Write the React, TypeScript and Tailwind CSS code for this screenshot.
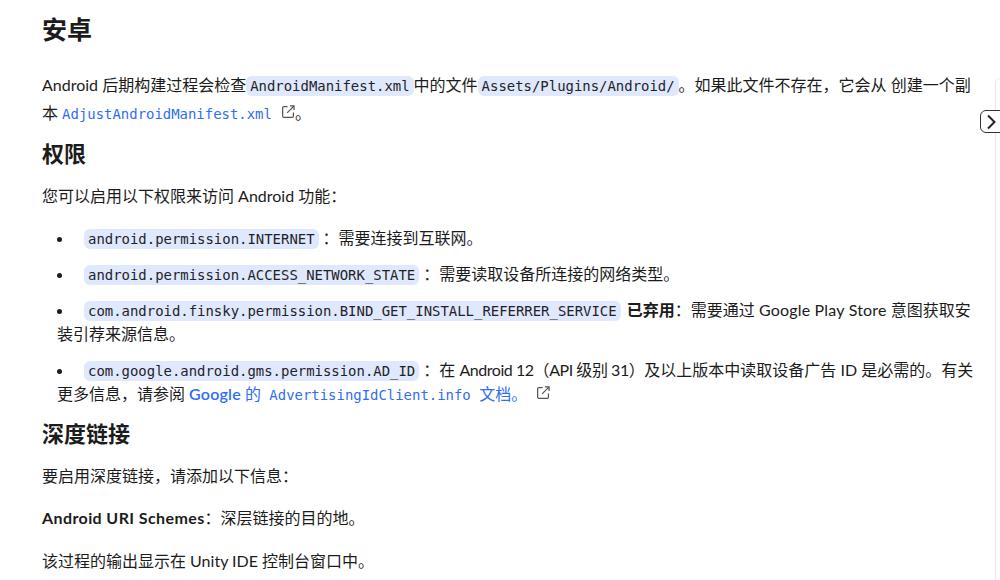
const mono = "font-['DejaVu_Sans_Mono','Liberation_Mono',monospace] text-[13.95px] leading-none";

function Code({ children }: { children: React.ReactNode }) {
  return (
    <code className={`${mono} bg-[#dfe8fc] rounded-[6px] px-[4px] py-[2px] text-[#1f2329]`}>
      {children}
    </code>
  );
}

function Ext() {
  return (
    <svg width="13" height="13" viewBox="0 0 14 14" fill="none" stroke="#555" strokeWidth="1.3" className="inline-block align-[1px] ml-[10px]">
      <path d="M6 1.7H2a1.3 1.3 0 0 0-1.3 1.3v9a1.3 1.3 0 0 0 1.3 1.3h9a1.3 1.3 0 0 0 1.3-1.3V8" />
      <path d="M5.5 8.5 12.8 1.2M8.5 1h4.5v4.5" />
    </svg>
  );
}

function Colon() {
  return <span className="inline-block w-[16px] ml-[4px]">：</span>;
}

function Item({ children }: { children: React.ReactNode }) {
  return <li className="mb-[12px] leading-[24px]">{children}</li>;
}

export default function App() {
  return (
    <div className="relative flex w-[1000px] h-[580px] overflow-hidden bg-white text-[#1c1c1c] text-[16px] font-['Lato','Noto_Sans_CJK_SC',sans-serif]">
      <main className="w-[995px] shrink-0 pl-[42px] pr-[19px] pt-[11px]">
        <h1 className="text-[25px] font-bold leading-[36px] mb-[24px]">安卓</h1>
        <p className="leading-[28px] mb-[12px]">
          Android 后期构建过程会检查<Code>AndroidManifest.xml</Code>中的文件<Code>Assets/Plugins/Android/</Code>。如果此文件不存在，它会从 创建一个副本 <a className={`${mono} text-[#2f6df6]`}>AdjustAndroidManifest.xml</a><Ext />。
        </p>
        <h2 className="text-[22px] font-bold leading-[30px] mb-[15px]">权限</h2>
        <p className="leading-[24px] mb-[18px]">您可以启用以下权限来访问 Android 功能：</p>
        <ul className="list-disc list-inside pl-[15px]">
          <Item><span className="ml-[5px]"></span><Code>android.permission.INTERNET</Code><Colon />需要连接到互联网。</Item>
          <Item><span className="ml-[5px]"></span><Code>android.permission.ACCESS_NETWORK_STATE</Code><Colon />需要读取设备所连接的网络类型。</Item>
          <Item><span className="ml-[5px]"></span><Code>com.android.finsky.permission.BIND_GET_INSTALL_REFERRER_SERVICE</Code> <b className="ml-[2px]">已弃用</b>：需要通过 <span className="tracking-[0.2px]">Google Play Store</span> 意图获取安装引荐来源信息。</Item>
          <Item><span className="ml-[5px]"></span><Code>com.google.android.gms.permission.AD_ID</Code><Colon />在 <span className="tracking-[-0.45px]">Android 12（API 级别 31）</span>及以上版本中读取设备广告 ID 是必需的。有关更多信息，请参阅 <a className="text-[#2f6df6]"><span className="font-semibold tracking-[0.2px]">Google</span> 的<span className={mono}>{" AdvertisingIdClient.info "}</span>文档。</a><Ext /></Item>
        </ul>
        <h2 className="text-[22px] font-bold leading-[30px] mt-[13px] mb-[15px]">深度链接</h2>
        <p className="leading-[24px] mb-[18px]">要启用深度链接，请添加以下信息：</p>
        <p className="leading-[24px] mb-[19px]"><b className="tracking-[0.4px]">Android URI Schemes</b>：深层链接的目的地。</p>
        <p className="leading-[24px]">该过程的输出显示在 Unity IDE 控制台窗口中。</p>
      </main>
      <aside className="flex-1 mt-[78px] border-l border-t border-[#e8e8e8] rounded-tl-[8px]" />
      <button className="absolute left-[980px] top-[110px] w-[26px] h-[23px] rounded-[6px] border border-[#333] bg-white">
        <svg width="12" height="16" viewBox="0 0 12 16" fill="none" stroke="#222" strokeWidth="2" className="absolute left-[5px] top-[2.5px]"><path d="M2 1.5l6.5 6.5L2 14.5" /></svg>
      </button>
    </div>
  );
}
